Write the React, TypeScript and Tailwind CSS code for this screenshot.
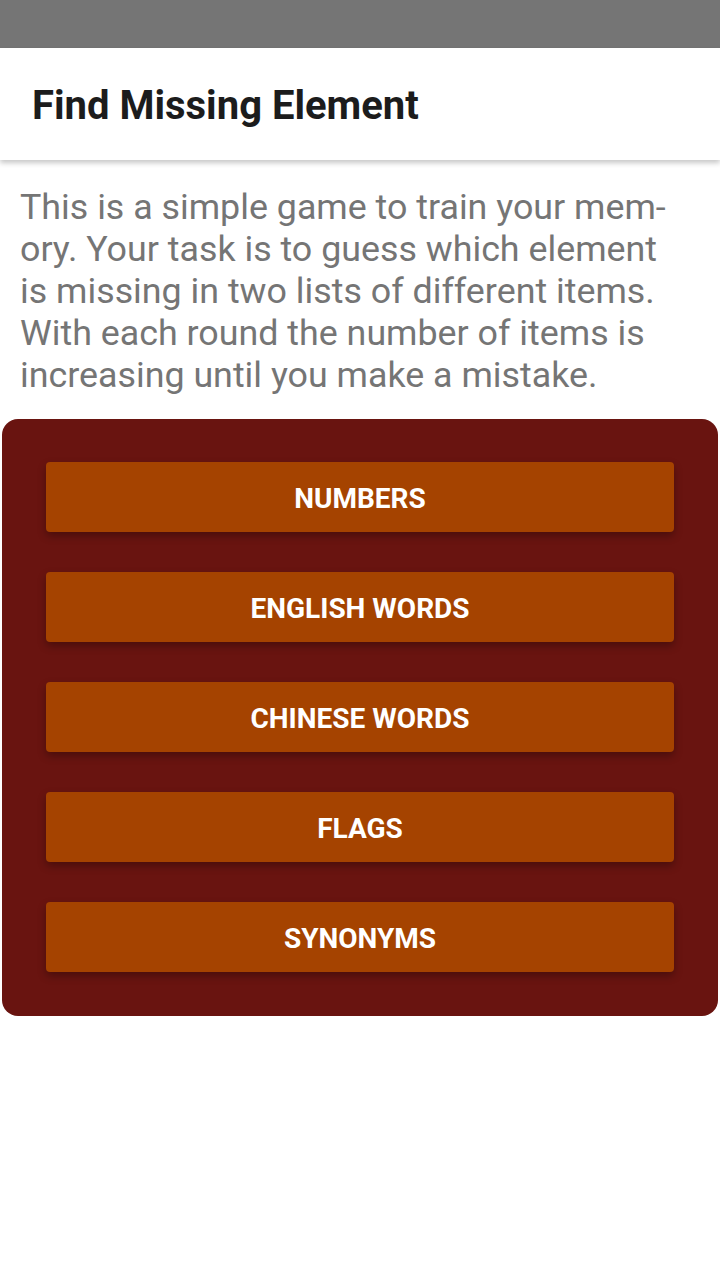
const CATEGORIES = ['Numbers', 'English words', 'Chinese words', 'Flags', 'Synonyms'];

const INTRO = [
  'This is a simple game to train your mem-',
  'ory. Your task is to guess which element',
  'is missing in two lists of different items.',
  'With each round the number of items is',
  'increasing until you make a mistake.',
];

export default function App() {
  return (
    <div className="min-h-screen bg-white font-['Roboto',sans-serif]">
      <div className="h-[48px] bg-[#757575]" />

      <header className="relative z-10 flex h-[112px] items-center bg-white px-[32px] pt-[4px] shadow-[0_3px_5px_rgba(0,0,0,0.22)]">
        <h1 className="text-[40px] font-bold text-[#1c1c1c]">Find Missing Element</h1>
      </header>

      <div className="px-[20px] pt-[26px] text-[35.8px] leading-[42px] text-[#757575]">
        {INTRO.map(line => (
          <p key={line} className="whitespace-nowrap">{line}</p>
        ))}
      </div>

      <section className="mx-[2px] mt-[23px] flex flex-col gap-[40px] rounded-[16px] bg-[#691410] px-[44px] pt-[43px] pb-[44px]">
        {CATEGORIES.map(name => (
          <button
            key={name}
            className="h-[70px] rounded-[4px] bg-[#a54300] pt-[3px] text-[28px] font-bold uppercase text-white shadow-[0_4px_8px_rgba(0,0,0,0.3)]"
          >
            {name}
          </button>
        ))}
      </section>
    </div>
  );
}
